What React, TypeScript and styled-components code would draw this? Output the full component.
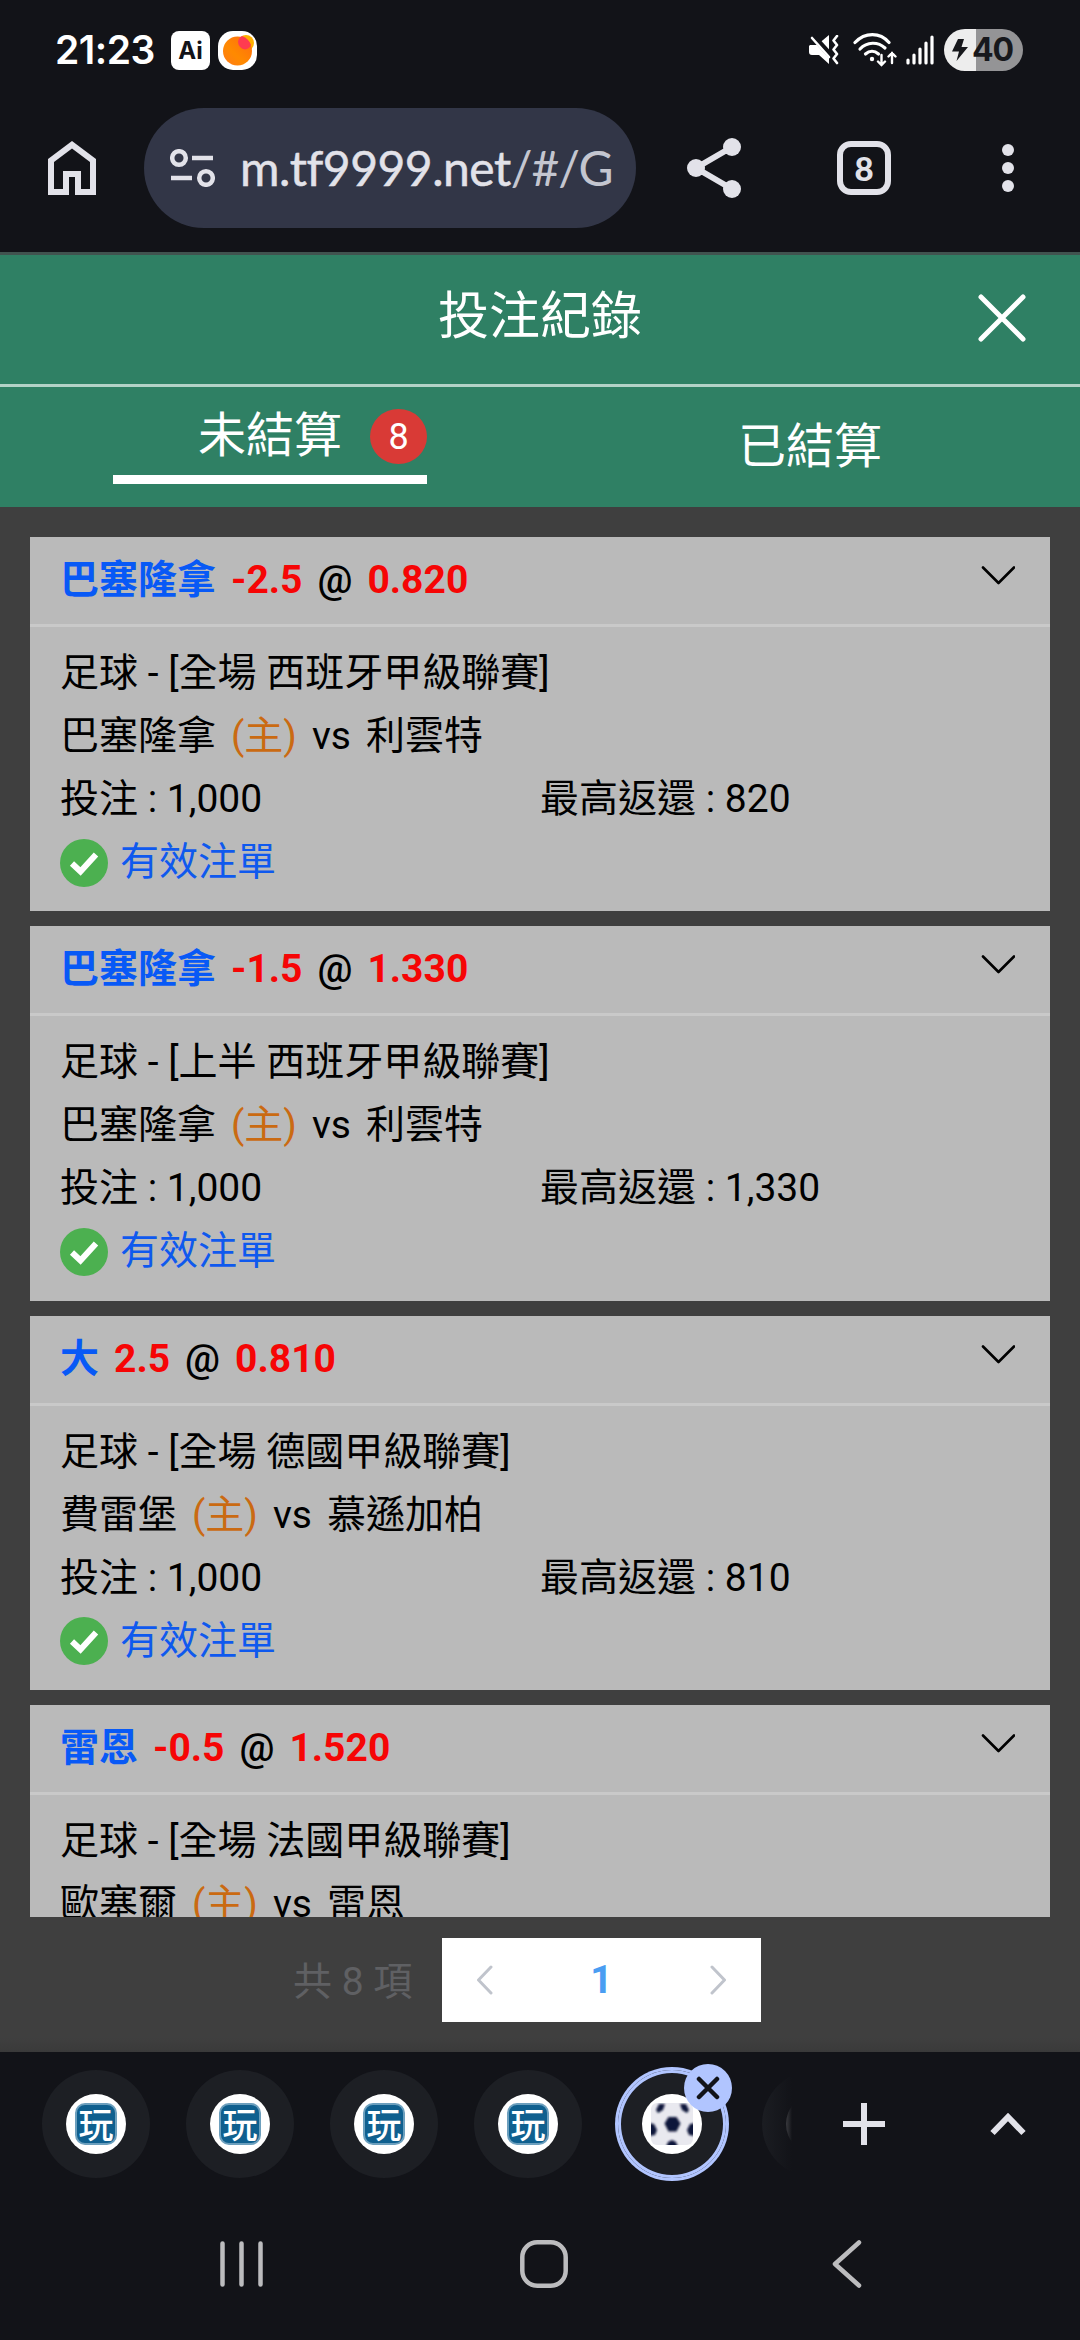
import React from "react";
import styled, { createGlobalStyle, css } from "styled-components";

const uiFont = `Roboto, "Noto Sans CJK TC", sans-serif`;
const chromeFont = `Lato, "Noto Sans", sans-serif`;
const statusFont = `Inter, Roboto, sans-serif`;

const GlobalStyle = createGlobalStyle`
  *, *::before, *::after { box-sizing: border-box; }
  body { margin: 0; background: #121318; }
  button { border: 0; padding: 0; background: none; font: inherit; color: inherit; }
  svg { display: block; flex: none; }
`;

const Phone = styled.div`
  width: 1080px;
  height: 2340px;
  display: flex;
  flex-direction: column;
  overflow: hidden;
  background: #121318;
  font-family: ${uiFont};
`;

/* ---------- status bar ---------- */

const StatusBar = styled.header`
  height: 100px;
  padding: 0 57px 0 55px;
  display: flex;
  align-items: center;
  color: #fff;
`;

const Clock = styled.span`
  width: 116px;
  font: 600 39px/48px ${statusFont};
  letter-spacing: -0.5px;
  white-space: nowrap;
`;

const AiBadge = styled.span`
  width: 39px;
  height: 39px;
  margin-right: 8px;
  display: grid;
  place-items: center;
  border-radius: 8px;
  background: #fff;
  color: #121318;
  font: 700 24px/39px ${statusFont};
`;

const StatusIcons = styled.div`
  margin-left: auto;
  display: flex;
  align-items: center;
`;

const WifiIcon = styled.svg`
  margin: 0 9px 0 14px;
`;

const Battery = styled.span`
  width: 79px;
  height: 42px;
  margin-left: 10px;
  padding-left: 8px;
  display: flex;
  align-items: center;
  gap: 4px;
  border-radius: 21px;
  background: linear-gradient(90deg, #ededed 32px, #949496 32px);
  color: #17181c;
  font: 700 32px/42px ${statusFont};
  letter-spacing: -1.2px;
`;

/* ---------- browser toolbar ---------- */

const Toolbar = styled.nav`
  height: 152px;
  padding: 8px 0 24px;
  display: flex;
  align-items: center;
`;

const ToolButton = styled.button<{ $w: number }>`
  width: ${(p) => p.$w}px;
  height: 120px;
  display: grid;
  place-items: center;
`;

const AddressBar = styled.div`
  width: 492px;
  height: 120px;
  padding: 0 26px;
  display: flex;
  align-items: center;
  gap: 25px;
  border-radius: 60px;
  background: #323647;
  overflow: hidden;
`;

const Url = styled.span`
  color: #e2e2e9;
  font: 400 48px/60px ${chromeFont};
  letter-spacing: -0.5px;
  white-space: nowrap;
  -webkit-text-stroke: 0.5px currentColor;
`;

const UrlPath = styled.span`
  color: #c4c6d0;
  -webkit-text-stroke: 0;
  letter-spacing: -1px;
`;

const TabCount = styled.span`
  width: 54px;
  height: 54px;
  display: grid;
  place-items: center;
  border: 6px solid #e2e2e9;
  border-radius: 14px;
  color: #e2e2e9;
  font: 900 33px/42px ${chromeFont};
`;

/* ---------- web page ---------- */

const Page = styled.main`
  height: 1800px;
  display: flex;
  flex-direction: column;
  background: linear-gradient(#3f3f3f 1786px, #3a3a3a);
`;

const TitleBar = styled.div`
  height: 135px;
  display: grid;
  grid-template-columns: 156px 1fr 156px;
  align-items: center;
  border-top: 3px solid #41534f;
  border-bottom: 3px solid #b3d2c7;
  background: #2f8064;
`;

const Title = styled.h1`
  margin: 0;
  padding-bottom: 5px;
  grid-column: 2;
  text-align: center;
  color: #fff;
  font-weight: 400;
  font-size: 51px;
  line-height: 60px;
`;

const CloseButton = styled.button`
  padding-bottom: 4px;
  display: grid;
  place-items: center;
`;

const Tabs = styled.div`
  height: 120px;
  display: grid;
  grid-template-columns: 1fr 1fr;
  justify-items: center;
  align-items: center;
  background: #2f8064;
  color: #fff;
`;

const Tab = styled.button<{ $active?: boolean }>`
  position: relative;
  width: 314px;
  height: 74px;
  font-size: 48px;
  line-height: 64px;
  ${(p) =>
    p.$active &&
    css`
      height: 80px;
      padding-bottom: 16px;
      border-bottom: 9px solid #fff;
      margin-top: -6px;
    `}
`;

const Badge = styled.span`
  position: absolute;
  right: 0;
  top: 5px;
  width: 57px;
  height: 55px;
  border-radius: 50%;
  background: #d93a36;
  font-size: 36px;
  line-height: 56px;
  text-align: center;
`;

const BetList = styled.section`
  height: 1410px;
  padding: 30px 30px 0;
  display: flex;
  flex-direction: column;
  gap: 15px;
  overflow: hidden;
`;

const Card = styled.article`
  flex: none;
  height: 374.33px;
  background: #bababa;
  color: #000;
  font-size: 39px;
`;

const CardHead = styled.div`
  height: 90px;
  padding: 0 35px 0 30px;
  display: flex;
  align-items: flex-start;
  justify-content: space-between;
  border-bottom: 3px solid #c9c9c9;
  font-weight: 500;
`;

const Pick = styled.div`
  padding-top: 13px;
  display: flex;
  gap: 15px;
  line-height: 60px;
`;

const ExpandButton = styled.button`
  padding-top: 28px;
`;

const Team = styled.span`
  color: #0859f6;
  font-weight: 700;
`;

const Num = styled.span`
  color: #f60505;
  font-weight: 700;
`;

const CardBody = styled.div`
  padding: 15px 30px 0;
  line-height: 63px;
  white-space: nowrap;
`;

const Line = styled.div`
  height: 63px;
`;

const MatchLine = styled(Line)`
  display: flex;
  gap: 15px;
`;

const Host = styled.span`
  color: #ca6a12;
`;

const AmountLine = styled(Line)`
  display: grid;
  grid-template-columns: 480px 1fr;
`;

const StatusLine = styled(Line)`
  display: flex;
  align-items: center;
  gap: 12px;
  color: #0f59ee;
`;

const Pager = styled.footer`
  padding: 21px 0 0 293px;
  display: flex;
  align-items: center;
  gap: 29px;
  font-size: 39px;
`;

const Total = styled.span`
  width: 120px;
  padding-bottom: 5px;
  color: #5f6063;
  white-space: nowrap;
`;

const PagerBox = styled.div`
  width: 319px;
  height: 84px;
  padding: 0 34px;
  display: flex;
  align-items: center;
  justify-content: space-between;
  background: #fff;
`;

const PageNumber = styled.span`
  color: #4a9df2;
  font-weight: 700;
`;

/* ---------- tab strip and system navigation ---------- */

const TabStrip = styled.div`
  height: 144px;
  display: flex;
  align-items: center;
`;

const Strip = styled.div`
  position: relative;
  width: 792px;
  height: 144px;
  padding-left: 42px;
  display: flex;
  align-items: center;
  gap: 36px;
  overflow: hidden;
  &::after {
    content: "";
    position: absolute;
    right: 0;
    top: 0;
    width: 36px;
    height: 144px;
    background: linear-gradient(90deg, transparent, #121318);
  }
`;

const TabChip = styled.div<{ $selected?: boolean }>`
  position: relative;
  flex: none;
  width: 108px;
  height: 108px;
  display: grid;
  place-items: center;
  border-radius: 50%;
  background: #1d1f24;
  ${(p) =>
    p.$selected &&
    css`
      box-shadow: 0 0 0 3px #b1c5ff, inset 0 0 0 3px #b1c5ff;
    `}
`;

const Favicon = styled.span`
  width: 60px;
  height: 60px;
  display: grid;
  place-items: center;
  border-radius: 50%;
  background: #fff;
`;

const PlayMark = styled.span`
  width: 42px;
  height: 42px;
  border: 2px solid #6c9fbd;
  border-radius: 10px;
  background: #10608f;
  color: #fff;
  text-align: center;
  font: 500 35px/36px "Noto Sans CJK TC", sans-serif;
`;

const ChipClose = styled.span`
  position: absolute;
  left: 66px;
  top: -6px;
  width: 48px;
  height: 48px;
  display: grid;
  place-items: center;
  border-radius: 50%;
  background: #b1c5ff;
`;

const SystemNav = styled.nav`
  height: 144px;
  padding: 0 94px 8px 102px;
  display: grid;
  grid-template-columns: 278px 1fr 278px;
  place-items: center;
`;

const BallIcon = () => (
  <svg width="42" height="42" viewBox="0 0 42 42">
    <defs>
      <clipPath id="ball">
        <rect width="42" height="42" rx="6" />
      </clipPath>
      <filter id="soft">
        <feGaussianBlur stdDeviation="1.2" />
      </filter>
    </defs>
    <g clipPath="url(#ball)">
      <rect width="42" height="42" fill="#e9e9ef" />
      <g fill="#10143a" filter="url(#soft)">
        <path d="M17.500 14h8l4 6.500-4 8h-8l-4-8z" />
        <path d="M8 1h6l-2 6-5 3-2-3z" />
        <path d="M35 1h-6l2 6 5 3 2-3z" />
        <path d="M-2 20l5 1 3 6-2 5-6 1z" />
        <path d="M44 20l-5 1-3 6 2 5 6 1z" />
        <path d="M15 44l2-5 4-2 4 2 2 5z" />
      </g>
    </g>
  </svg>
);

const bets = [
  { pick: "巴塞隆拿", line: "-2.5", odds: "0.820", league: "足球 - [全場 西班牙甲級聯賽]", home: "巴塞隆拿", away: "利雲特", stake: "1,000", payout: "820" },
  { pick: "巴塞隆拿", line: "-1.5", odds: "1.330", league: "足球 - [上半 西班牙甲級聯賽]", home: "巴塞隆拿", away: "利雲特", stake: "1,000", payout: "1,330" },
  { pick: "大", line: "2.5", odds: "0.810", league: "足球 - [全場 德國甲級聯賽]", home: "費雷堡", away: "慕遜加柏", stake: "1,000", payout: "810" },
  { pick: "雷恩", line: "-0.5", odds: "1.520", league: "足球 - [全場 法國甲級聯賽]", home: "歐塞爾", away: "雷恩", stake: "", payout: "" },
];

const BetCard = ({ bet }: { bet: (typeof bets)[number] }) => (
  <Card>
    <CardHead>
      <Pick>
        <Team>{bet.pick}</Team>
        <Num>{bet.line}</Num>
        <span>@</span>
        <Num>{bet.odds}</Num>
      </Pick>
      <ExpandButton>
        <svg width="34" height="20" viewBox="0 0 34 20" fill="none" stroke="#000" strokeWidth="2.600" strokeLinecap="round" strokeLinejoin="round">
          <path d="M2 2.500L17.500 18 33 2.500" />
        </svg>
      </ExpandButton>
    </CardHead>
    <CardBody>
      <Line>{bet.league}</Line>
      <MatchLine>
        <span>{bet.home}</span>
        <Host>(主)</Host>
        <span>vs</span>
        <span>{bet.away}</span>
      </MatchLine>
      {bet.stake && (
        <>
          <AmountLine>
            <span>投注 : {bet.stake}</span>
            <span>最高返還 : {bet.payout}</span>
          </AmountLine>
          <StatusLine>
            <svg width="48" height="48" viewBox="0 0 48 48">
              <circle cx="24" cy="24" r="24" fill="#4cb050" />
              <path d="M12 24.500l8.500 8L36 15.500" fill="none" stroke="#fff" strokeWidth="6" />
            </svg>
            <span>有效注單</span>
          </StatusLine>
        </>
      )}
    </CardBody>
  </Card>
);

export default function App() {
  return (
    <Phone>
      <GlobalStyle />
      <StatusBar>
        <Clock>21:23</Clock>
        <AiBadge>Ai</AiBadge>
        <svg width="39" height="39" viewBox="0 0 39 39">
          <defs>
            <linearGradient id="sun" x1="0" y1="1" x2="1" y2="0">
              <stop offset="0" stopColor="#ff7a1a" />
              <stop offset="0.4" stopColor="#ff8a00" />
              <stop offset="1" stopColor="#ff6a10" />
            </linearGradient>
          </defs>
          <rect width="39" height="39" rx="15" fill="#fff" />
          <circle cx="28" cy="12" r="8" fill="#ffb000" />
          <circle cx="19.5" cy="20" r="14.5" fill="url(#sun)" />
          <path d="M20 11a8 8 0 0 1 4-6 14.500 14.500 0 0 1 9 9 8 8 0 0 1-6 4.500 8 8 0 0 1-7-7.500z" fill="#ff3b50" />
        </svg>
        <StatusIcons>
          <svg width="30" height="30" viewBox="0 0 30 30" fill="none">
            <path d="M1 10h7L20 0v29l-10-9H3a3 3 0 0 1-3-3v-6z" fill="#fff" />
            <path d="M2 -1L22 21" stroke="#121318" strokeWidth="6" />
            <path d="M3 3L20 22" stroke="#fff" strokeWidth="2.600" strokeLinecap="round" />
            <path d="M28 1l-3.500 4.500 3.500 4.500-3.500 4.500 3.500 4.500-3.500 4.500 3.500 4.500" stroke="#fff" strokeWidth="2.600" strokeLinecap="round" strokeLinejoin="round" />
          </svg>
          <WifiIcon width="44" height="34" viewBox="0 0 44 34" fill="none" stroke="#fff" strokeWidth="3.200" strokeLinecap="round">
            <path d="M2 9.500C12-1 27-1 36 9.500" />
            <path d="M7 16c7-7.500 18-7.500 25-1" />
            <path d="M12.500 21c4-3.500 9-3.500 13 0" />
            <circle cx="19" cy="26" r="2.200" fill="#fff" stroke="none" />
            <path d="M28.500 22v10m-3.500-3.500l3.500 3.500 3.500-3.500M39 30V20m-3.500 3.500l3.500-3.500 3.500 3.500" strokeWidth="2.400" />
          </WifiIcon>
          <svg width="28" height="30" viewBox="0 0 28 30" stroke="#fff" strokeWidth="3.200" strokeLinecap="round">
            <path d="M2 25v3M8 20v8M14 14v14M20 8v20M26 2v26" />
          </svg>
          <Battery>
            <svg width="16" height="22" viewBox="0 0 16 22" fill="#17181c">
              <path d="M6 0h6L9.500 8H16L4.500 22 7 12.500H0z" />
            </svg>
            40
          </Battery>
        </StatusIcons>
      </StatusBar>

      <Toolbar>
        <ToolButton $w={144}>
          <svg width="48" height="54" viewBox="0 0 48 54" fill="#e2e2e9">
            <path fillRule="evenodd" d="M24 0L48 18V54H27V36h-6v18H0V18zM24 7.500L6 21v27h9V30h18v18h9V21z" />
          </svg>
        </ToolButton>
        <AddressBar>
          <svg width="45" height="38" viewBox="0 0 45 38" fill="none" stroke="#e2e2e9" strokeWidth="4.500">
            <circle cx="9" cy="9" r="6.800" />
            <path d="M22 9h21M1 29h21" />
            <circle cx="36" cy="29" r="6.800" />
          </svg>
          <Url>
            m.tf9999.net<UrlPath>/#/G</UrlPath>
          </Url>
        </AddressBar>
        <ToolButton $w={156}>
          <svg width="54" height="60" viewBox="0 0 54 60" fill="#e2e2e9">
            <path d="M45 9L9 30l36 21" fill="none" stroke="#e2e2e9" strokeWidth="6" />
            <circle cx="45" cy="9" r="9" />
            <circle cx="9" cy="30" r="9" />
            <circle cx="45" cy="51" r="9" />
          </svg>
        </ToolButton>
        <ToolButton $w={144}>
          <TabCount>8</TabCount>
        </ToolButton>
        <ToolButton $w={144}>
          <svg width="12" height="48" viewBox="0 0 12 48" fill="#e2e2e9">
            <circle cx="6" cy="6" r="6" />
            <circle cx="6" cy="24" r="6" />
            <circle cx="6" cy="42" r="6" />
          </svg>
        </ToolButton>
      </Toolbar>

      <Page>
        <TitleBar>
          <Title>投注紀錄</Title>
          <CloseButton>
            <svg width="48" height="48" viewBox="0 0 48 48" stroke="#fff" strokeWidth="5" strokeLinecap="round">
              <path d="M3 3l42 42M45 3L3 45" />
            </svg>
          </CloseButton>
        </TitleBar>
        <Tabs>
          <Tab $active>
            未結算<Badge>8</Badge>
          </Tab>
          <Tab>已結算</Tab>
        </Tabs>
        <BetList>
          {bets.map((bet, i) => (
            <BetCard key={i} bet={bet} />
          ))}
        </BetList>
        <Pager>
          <Total>共 8 項</Total>
          <PagerBox>
            <svg width="17" height="30" viewBox="0 0 17 30" fill="none" stroke="#c0c4cc" strokeWidth="3" strokeLinecap="round" strokeLinejoin="round">
              <path d="M15 2L2.500 15 15 28" />
            </svg>
            <PageNumber>1</PageNumber>
            <svg width="17" height="30" viewBox="0 0 17 30" fill="none" stroke="#c0c4cc" strokeWidth="3" strokeLinecap="round" strokeLinejoin="round">
              <path d="M2 2l12.500 13L2 28" />
            </svg>
          </PagerBox>
        </Pager>
      </Page>

      <TabStrip>
        <Strip>
          {[0, 1, 2, 3].map((i) => (
            <TabChip key={i}>
              <Favicon>
                <PlayMark>玩</PlayMark>
              </Favicon>
            </TabChip>
          ))}
          <TabChip $selected>
            <Favicon>
              <BallIcon />
            </Favicon>
            <ChipClose>
              <svg width="24" height="24" viewBox="0 0 24 24" stroke="#121318" strokeWidth="4.500" strokeLinecap="round">
                <path d="M3 3l18 18M21 3L3 21" />
              </svg>
            </ChipClose>
          </TabChip>
          <TabChip>
            <Favicon />
          </TabChip>
        </Strip>
        <ToolButton $w={144}>
          <svg width="42" height="42" viewBox="0 0 42 42" stroke="#e2e2e9" strokeWidth="6">
            <path d="M21 0v42M0 21h42" />
          </svg>
        </ToolButton>
        <ToolButton $w={144}>
          <svg width="36" height="24" viewBox="0 0 36 24" fill="none" stroke="#e2e2e9" strokeWidth="6">
            <path d="M2.500 21L18 5l15.500 16" />
          </svg>
        </ToolButton>
      </TabStrip>

      <SystemNav>
        <svg width="43" height="48" viewBox="0 0 43 48" stroke="#bcbcbe" strokeWidth="4.500" strokeLinecap="round">
          <path d="M2.500 3.500v41M21.500 3.500v41M40.500 3.500v41" />
        </svg>
        <svg width="48" height="48" viewBox="0 0 48 48" fill="none" stroke="#bcbcbe" strokeWidth="4.500">
          <rect x="2.300" y="2.300" width="43.400" height="43.400" rx="15" />
        </svg>
        <svg width="30" height="48" viewBox="0 0 30 48" fill="none" stroke="#bcbcbe" strokeWidth="4.500" strokeLinecap="round" strokeLinejoin="round">
          <path d="M27 2.500L3 24l24 21.500" />
        </svg>
      </SystemNav>
    </Phone>
  );
}
